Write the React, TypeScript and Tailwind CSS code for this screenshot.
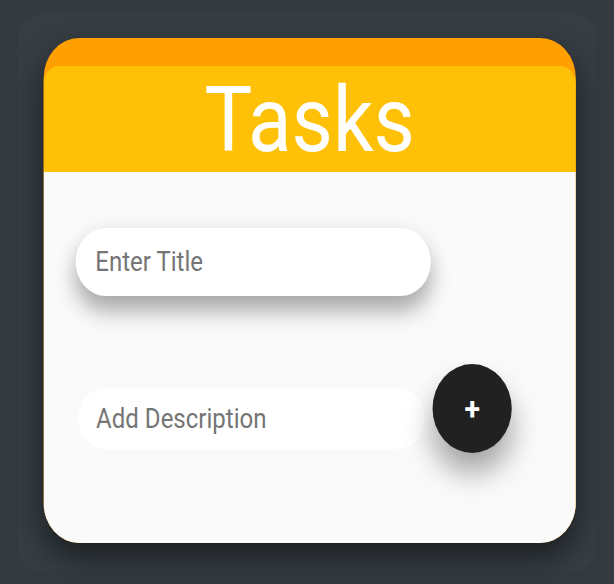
import React from "react";

export default function App() {
  return (
    <div className="w-[614px] h-[584px] overflow-hidden bg-[#343a40]" style={{ fontFamily: "Roboto, 'Noto Sans', sans-serif" }}>
      <div className="w-[690px] h-[584px] origin-top-left scale-x-[0.89] pt-[14px] pl-[20px]">
        <div className="w-[650px] h-[557px] rounded-[24px] bg-[#363d43] pt-[24px] pl-[29px]">
          <div className="w-[598px] h-[505px] rounded-[40px] overflow-hidden bg-[#ffa000] shadow-[0_14px_30px_rgba(0,0,0,0.5)] flex flex-col">
            <div className="pt-[28px]">
              <div className="h-[106px] rounded-t-[18px] bg-[#ffc107] flex justify-center pt-[10px]">
                <h1 className="text-[90px] leading-none font-normal text-white">Tasks</h1>
              </div>
            </div>
            <div className="flex-1 bg-[#fafafa] pt-[56px] pl-[36px]">
              <input
                type="text"
                placeholder="Enter Title"
                className="block w-[399px] h-[68px] rounded-full bg-white pl-[22px] text-[27px] text-[#555] placeholder:text-[#757575] outline-none shadow-[0_16px_22px_rgba(0,0,0,0.3),0_0_24px_rgba(0,0,0,0.06)]"
              />
              <div className="flex items-start mt-[68px]">
                <input
                  type="text"
                  placeholder="Add Description"
                  className="block ml-[3px] mt-[24px] w-[389px] h-[61px] rounded-full bg-white pl-[20px] text-[27px] text-[#555] placeholder:text-[#757575] outline-none"
                />
                <button className="ml-[9px] w-[89px] h-[89px] rounded-full bg-[#212121] text-white text-[32px] font-bold leading-none flex items-center justify-center shadow-[0_20px_30px_rgba(0,0,0,0.35)]">
                  +
                </button>
              </div>
            </div>
          </div>
        </div>
      </div>
    </div>
  );
}
